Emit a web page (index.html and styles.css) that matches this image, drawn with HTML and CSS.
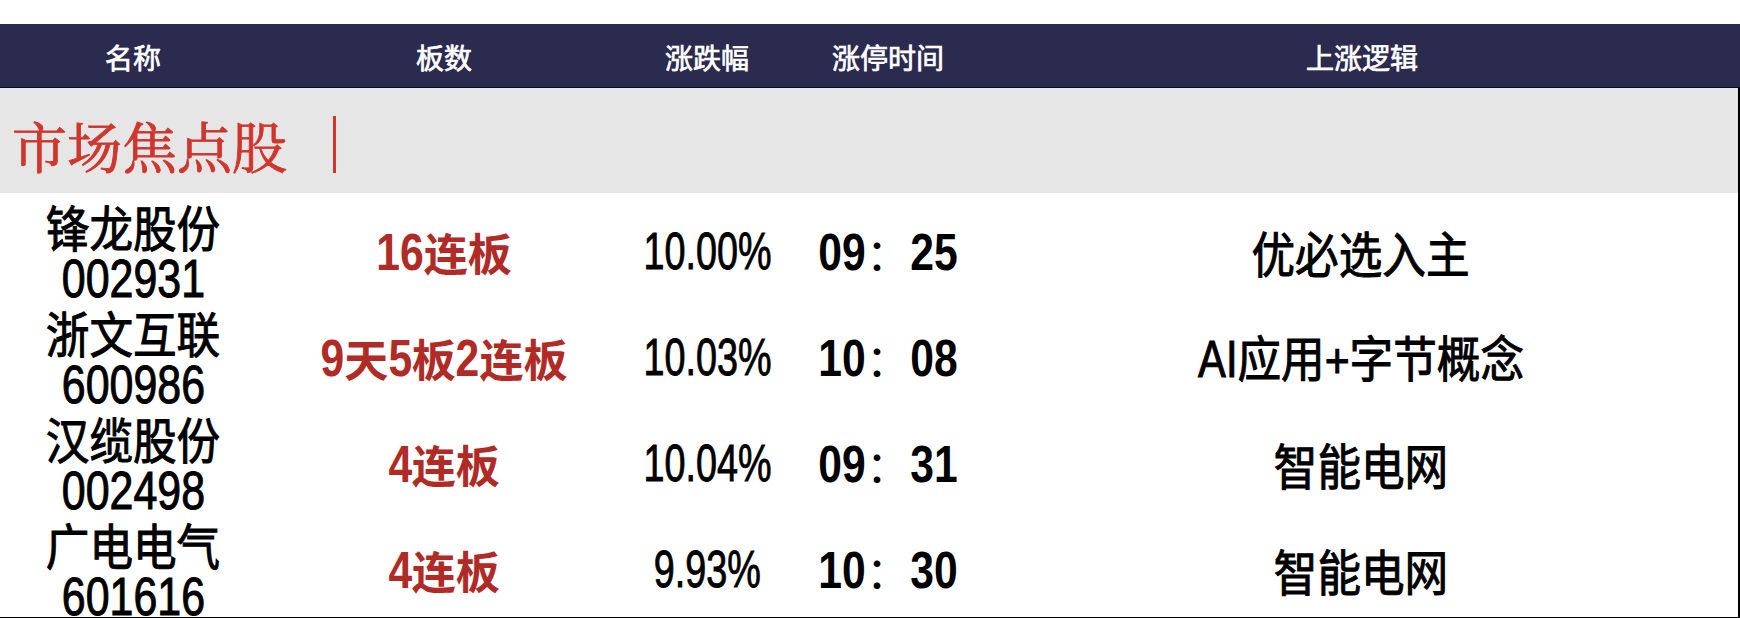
FILE: index.html
```html
<!DOCTYPE html>
<html lang="zh-CN">
<head>
<meta charset="utf-8">
<title>市场焦点股</title>
<link rel="stylesheet" href="styles.css">
</head>
<body>
<div class="page">
  <div class="top-gap"></div>
  <div class="table">
    <div class="thead">
      <div class="th">名称</div>
      <div class="th">板数</div>
      <div class="th">涨跌幅</div>
      <div class="th">涨停时间</div>
      <div class="th">上涨逻辑</div>
    </div>
    <div class="tbody">
      <div class="section">
        <span class="section-title">市场焦点股</span>
        <span class="section-bar"></span>
      </div>
      <div class="row">
        <div class="cell name"><span class="cn">锋龙股份</span><span class="code">002931</span></div>
        <div class="cell boards"><span class="n d2">16</span>连板</div>
        <div class="cell pct"><span class="pv">10.00%</span></div>
        <div class="cell time"><span class="n d2">09</span>：<span class="n d2">25</span></div>
        <div class="cell logic"><span class="lv">优必选入主</span></div>
      </div>
      <div class="row">
        <div class="cell name"><span class="cn">浙文互联</span><span class="code">600986</span></div>
        <div class="cell boards"><span class="n d1">9</span>天<span class="n d1">5</span>板<span class="n d1">2</span>连板</div>
        <div class="cell pct"><span class="pv">10.03%</span></div>
        <div class="cell time"><span class="n d2">10</span>：<span class="n d2">08</span></div>
        <div class="cell logic"><span class="lv"><span class="ai">AI</span>应用<span class="plus">+</span>字节概念</span></div>
      </div>
      <div class="row">
        <div class="cell name"><span class="cn">汉缆股份</span><span class="code">002498</span></div>
        <div class="cell boards"><span class="n d1">4</span>连板</div>
        <div class="cell pct"><span class="pv">10.04%</span></div>
        <div class="cell time"><span class="n d2">09</span>：<span class="n d2">31</span></div>
        <div class="cell logic"><span class="lv">智能电网</span></div>
      </div>
      <div class="row">
        <div class="cell name"><span class="cn">广电电气</span><span class="code">601616</span></div>
        <div class="cell boards"><span class="n d1">4</span>连板</div>
        <div class="cell pct"><span class="pv">9.93%</span></div>
        <div class="cell time"><span class="n d2">10</span>：<span class="n d2">30</span></div>
        <div class="cell logic"><span class="lv">智能电网</span></div>
      </div>
    </div>
  </div>
</div>
</body>
</html>
```

FILE: styles.css
```css
* { box-sizing: border-box; }
html, body {
  margin: 0;
  padding: 0;
  background: #ffffff;
}
body {
  font-family: "Noto Sans CJK SC", "Liberation Sans", sans-serif;
  color: #000;
}
.page {
  width: 1740px;
  height: 618px;
  overflow: hidden;
}
.top-gap {
  height: 24px;
}
.thead {
  display: grid;
  grid-template-columns: 266px 356px 170px 192px 1fr;
  height: 64px;
  background: #2b2a4f;
  border-bottom: 1px solid #0c0b22;
}
.th {
  display: flex;
  align-items: center;
  justify-content: center;
  color: #ffffff;
  font-size: 28px;
  font-weight: 400;
  -webkit-text-stroke: 0.7px #ffffff;
  padding-top: 2px;
}
.tbody {
  border-right: 2px solid #000;
  border-bottom: 1px solid #000;
}
.section {
  height: 105px;
  background: #e6e6e6;
  display: flex;
  align-items: center;
  padding-left: 12px;
  padding-top: 8px;
}
.section-title {
  font-family: "Noto Serif CJK SC", "Noto Sans CJK SC", serif;
  font-size: 55px;
  line-height: 60px;
  color: #d0362d;
  -webkit-text-stroke: 0.9px #d0362d;
}
.section-bar {
  width: 3px;
  height: 57px;
  background: #d0362d;
  margin-left: 46px;
}
.row {
  display: grid;
  grid-template-columns: 266px 356px 170px 192px 1fr;
  height: 106px;
  padding-top: 8px;
}
.cell {
  display: flex;
  align-items: center;
  justify-content: center;
  font-size: 44px;
  line-height: 60px;
  font-weight: 400;
  white-space: nowrap;
}
/* narrow digits: Liberation Sans squeezed to an Arial Narrow width */
.n {
  display: inline-block;
  font-family: "Liberation Sans", sans-serif;
  font-size: 52px;
  font-weight: 700;
  transform: scaleX(0.82);
}
.d1 { margin: 0 -0.05em; }
.d2 { margin: 0 -0.1em; }
.name {
  flex-direction: column;
  justify-content: flex-start;
}
.name .cn,
.name .code {
  display: block;
}
.name .cn {
  height: 50px;
  line-height: 50px;
  font-size: 49px;
  -webkit-text-stroke: 1px #000;
  transform: scaleX(0.89);
}
.name .code {
  height: 48px;
  line-height: 48px;
  margin-top: 4px;
  font-family: "Liberation Sans", sans-serif;
  font-size: 53px;
  -webkit-text-stroke: 1px #000;
  transform: scaleX(0.81);
}
.boards {
  color: #b02a26;
  font-weight: 700;
}
.pv {
  display: inline-block;
  font-family: "Liberation Sans", sans-serif;
  font-size: 51px;
  -webkit-text-stroke: 0.9px #000;
  transform: scaleX(0.74);
}
.lv {
  display: inline-block;
  font-size: 49px;
  -webkit-text-stroke: 1px #000;
  transform: scaleX(0.89);
}
.ai {
  font-family: "Liberation Sans", sans-serif;
  font-size: 51px;
  display: inline-block;
  transform: scaleX(0.92);
  margin: 0 -0.04em;
}
.plus {
  font-family: "Liberation Sans", sans-serif;
  font-size: 48px;
}
```
